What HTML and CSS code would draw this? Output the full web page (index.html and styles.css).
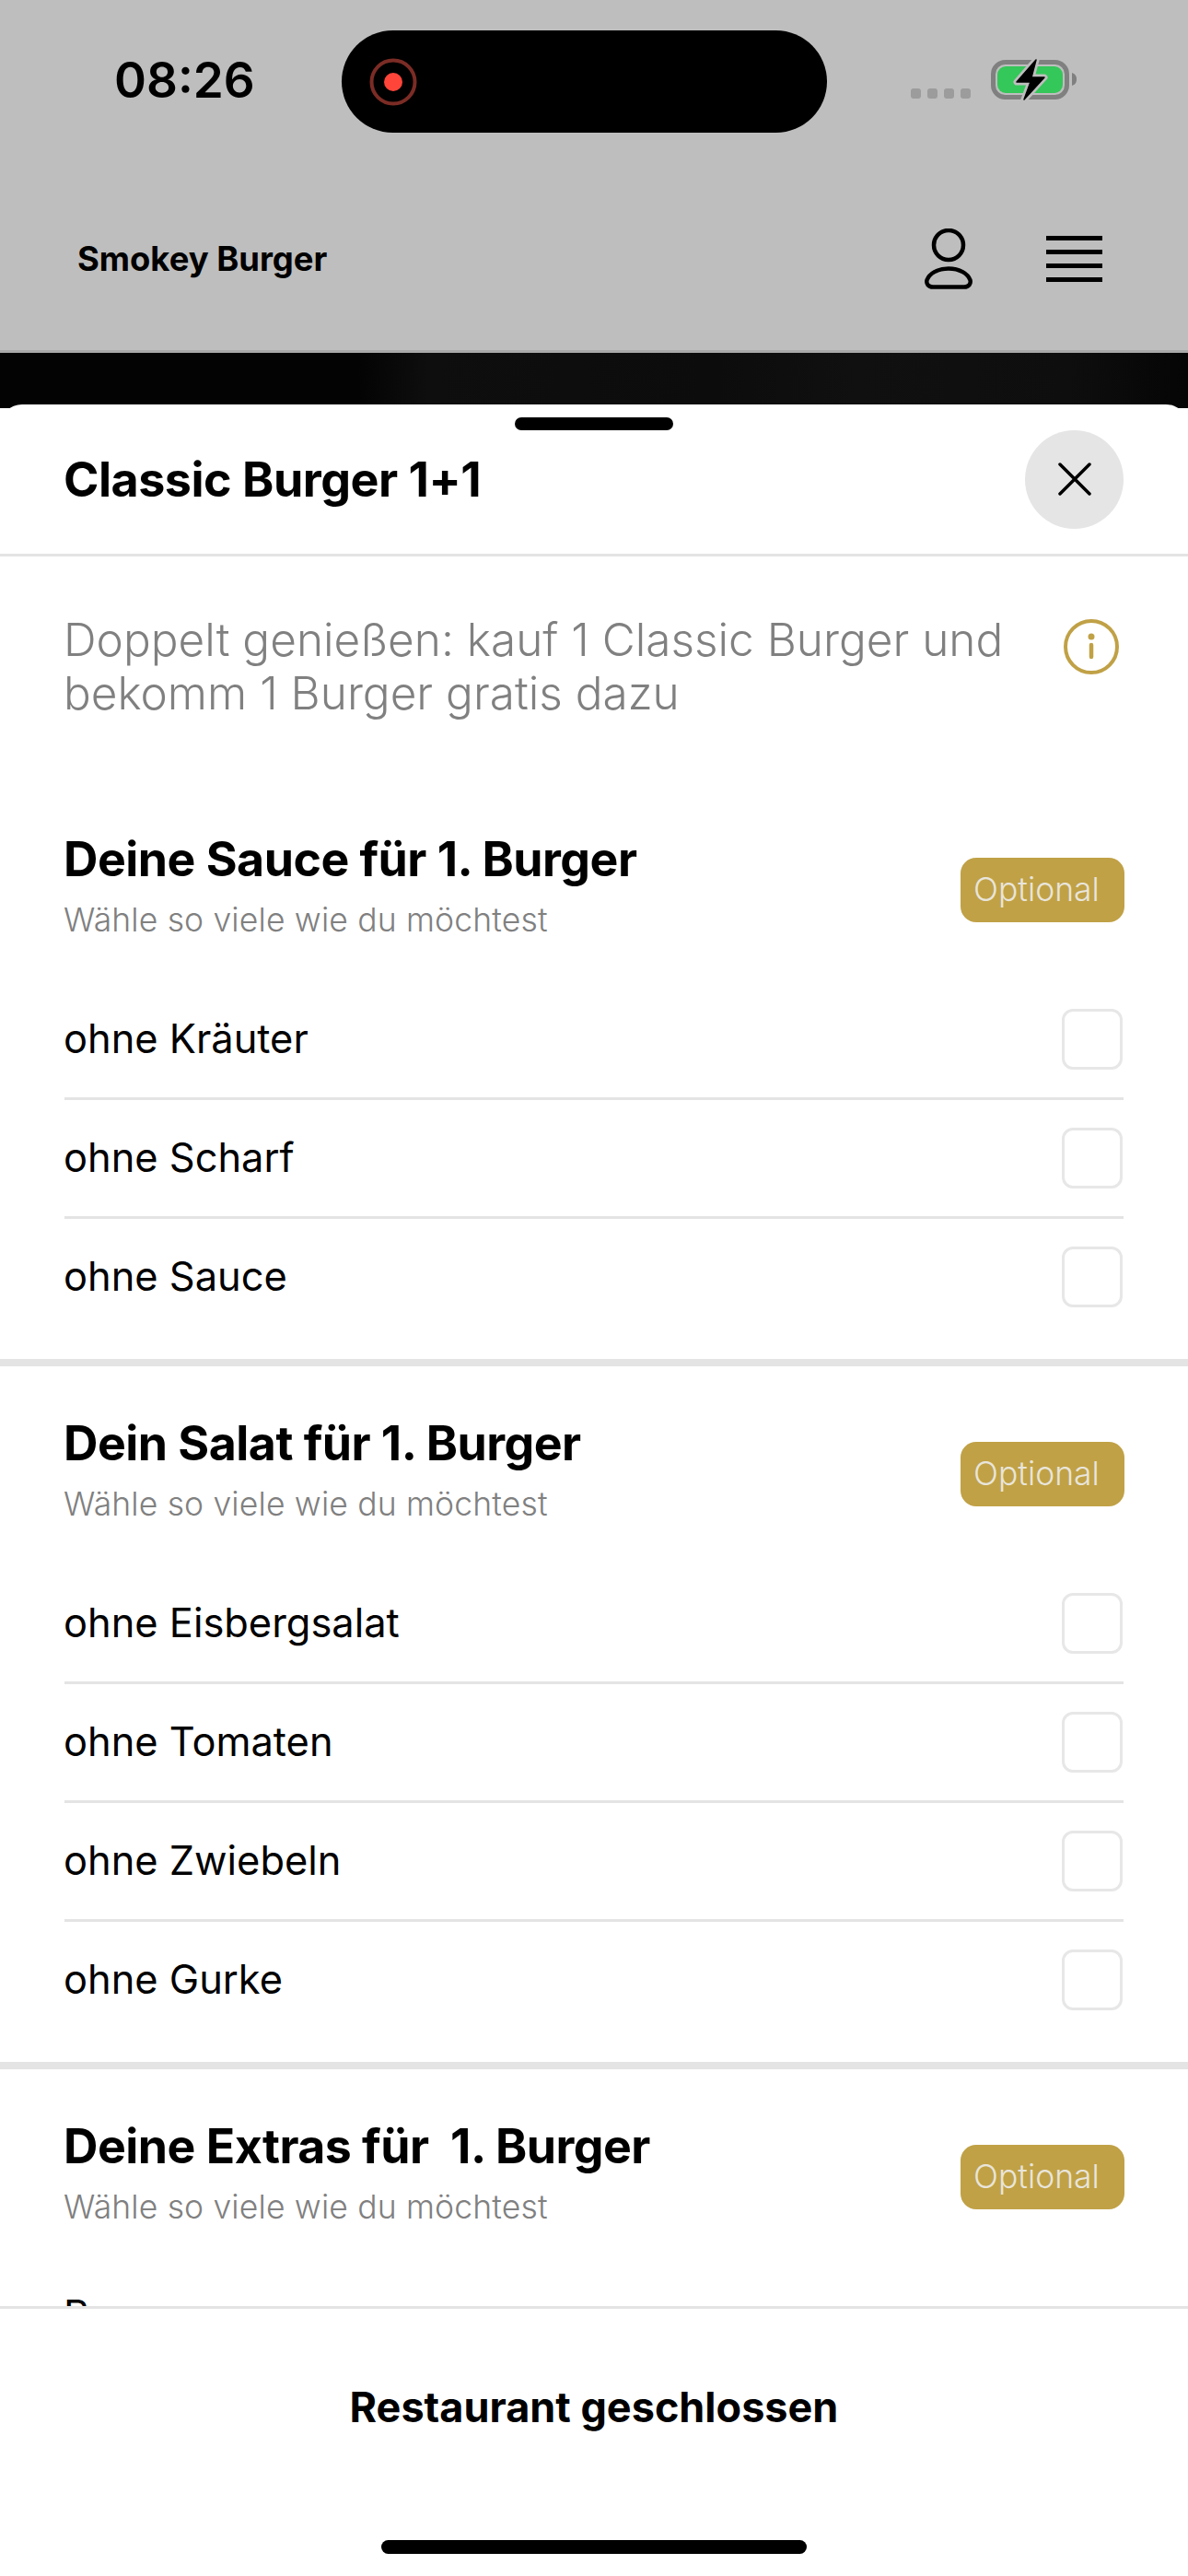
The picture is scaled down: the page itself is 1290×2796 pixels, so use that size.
FILE: index.html
```html
<!DOCTYPE html>
<html lang="en">
<head>
    <meta charset="UTF-8">
    <meta name="viewport" content="width=device-width, initial-scale=1.0">
    <title>Classic Burger 1+1 - Smokey Burger</title>
    <link rel="stylesheet" href="styles.css">
</head>
<body>
    <div class="page">
        <header class="top-bar">
            <div class="status-bar">
                <span class="time">08:26</span>
                <div class="island">
                    <svg class="record-icon" viewBox="0 0 52 52" width="52" height="52">
                        <circle cx="26" cy="26" r="23.5" fill="none" stroke="#7b2c25" stroke-width="4"/>
                        <circle cx="26" cy="26" r="10" fill="#ff453a"/>
                    </svg>
                </div>
                <div class="status-right">
                    <div class="signal"><span></span><span></span><span></span><span></span></div>
                    <svg class="battery" viewBox="0 0 96 46" width="96" height="46">
                        <rect x="2.5" y="4.500" width="80" height="38" rx="13" fill="none" stroke="#808080" stroke-width="5"/>
                        <rect x="7" y="9" width="71" height="29" rx="9" fill="#34c759"/>
                        <path d="M88 16c3 1 5 3 5 7s-2 6-5 7z" fill="#808080"/>
                        <path d="M49 2 28 26h15l-7 19 22-24H44z" fill="none" stroke="#bebebe" stroke-width="7" stroke-linejoin="round"/>
                        <path d="M49 2 28 26h15l-7 19 22-24H44z" fill="#000" stroke="#000" stroke-width="1.500" stroke-linejoin="round"/>
                    </svg>
                </div>
            </div>
            <nav class="nav-bar">
                <span class="brand">Smokey Burger</span>
                <div class="nav-icons">
                    <svg class="user-icon" viewBox="0 0 52 66" width="52" height="66">
                        <circle cx="26" cy="18" r="16" fill="none" stroke="#000" stroke-width="4.500"/>
                        <path d="M9 63.500h34c5 0 7.500-3.500 6.500-7.500C47 49 38 43.500 26 43.500S5 49 2.500 56c-1 4 1.500 7.500 6.500 7.500z" fill="none" stroke="#000" stroke-width="4.500"/>
                    </svg>
                    <div class="menu-icon"><span></span><span></span><span></span><span></span></div>
                </div>
            </nav>
        </header>
        <div class="hero-strip"></div>

        <div class="sheet">
            <div class="grabber"></div>
            <div class="sheet-head">
                <h1>Classic Burger 1+1</h1>
                <button class="close-btn">
                    <svg viewBox="0 0 36 36" width="36" height="36">
                        <path d="M2 2l32 32M34 2 2 34" stroke="#000" stroke-width="3.500" stroke-linecap="round"/>
                    </svg>
                </button>
            </div>

            <div class="sheet-body">
                <div class="intro">
                    <p>Doppelt genießen: kauf 1 Classic Burger und bekomm 1 Burger gratis dazu</p>
                    <svg class="info-icon" viewBox="0 0 60 60" width="60" height="60">
                        <circle cx="30" cy="30" r="28" fill="none" stroke="#c0a146" stroke-width="4"/>
                        <circle cx="30" cy="19" r="3.500" fill="#c0a146"/>
                        <path d="M30 28v13" stroke="#c0a146" stroke-width="4.500" stroke-linecap="round"/>
                    </svg>
                </div>

                <section class="group">
                    <div class="group-head">
                        <div>
                            <h2>Deine Sauce für 1. Burger</h2>
                            <p class="hint">Wähle so viele wie du möchtest</p>
                        </div>
                        <span class="badge">Optional</span>
                    </div>
                    <div class="option"><span>ohne Kräuter</span><i class="checkbox"></i></div>
                    <div class="option"><span>ohne Scharf</span><i class="checkbox"></i></div>
                    <div class="option"><span>ohne Sauce</span><i class="checkbox"></i></div>
                </section>

                <section class="group">
                    <div class="group-head">
                        <div>
                            <h2>Dein Salat für 1. Burger</h2>
                            <p class="hint">Wähle so viele wie du möchtest</p>
                        </div>
                        <span class="badge">Optional</span>
                    </div>
                    <div class="option"><span>ohne Eisbergsalat</span><i class="checkbox"></i></div>
                    <div class="option"><span>ohne Tomaten</span><i class="checkbox"></i></div>
                    <div class="option"><span>ohne Zwiebeln</span><i class="checkbox"></i></div>
                    <div class="option"><span>ohne Gurke</span><i class="checkbox"></i></div>
                </section>

                <section class="group">
                    <div class="group-head">
                        <div>
                            <h2>Deine Extras für &nbsp;1. Burger</h2>
                            <p class="hint">Wähle so viele wie du möchtest</p>
                        </div>
                        <span class="badge">Optional</span>
                    </div>
                    <div class="option option-peek"><span>Bacon</span></div>
                </section>
            </div>

            <div class="sheet-foot">
                <strong>Restaurant geschlossen</strong>
                <div class="home-bar"></div>
            </div>
        </div>
    </div>
</body>
</html>
```

FILE: styles.css
```css
* {
    box-sizing: border-box;
}
body {
    margin: 0;
    font-family: Inter, "Noto Sans", sans-serif;
    color: #000;
    background-color: #fff;
}
h1, h2, p {
    margin: 0;
}
.page {
    position: relative;
    height: 2796px;
    overflow: hidden;
}

/* dimmed page behind the sheet */
.top-bar {
    height: 383px;
    background-color: #bebebe;
    border-bottom: 3px solid #a9a9a9;
}
.status-bar {
    display: flex;
    align-items: flex-start;
    height: 144px;
    padding-top: 33px;
    padding-left: 124px;
}
.time {
    width: 247px;
    margin-top: 22px;
    font-size: 53px;
    line-height: 64px;
    font-weight: 600;
}
.island {
    display: flex;
    align-items: center;
    width: 527px;
    height: 111px;
    padding-left: 30px;
    background-color: #000;
    border-radius: 56px;
}
.status-right {
    display: flex;
    align-items: flex-end;
    margin-left: 91px;
    margin-top: 30px;
    gap: 22px;
}
.signal {
    display: flex;
    gap: 7px;
    margin-bottom: 2px;
}
.signal span {
    width: 11px;
    height: 11px;
    background-color: #9c9c9c;
    border-radius: 3px;
}
.nav-bar {
    display: flex;
    justify-content: space-between;
    align-items: center;
    height: 275px;
    margin-top: -1px;
    padding: 0 93px 0 84px;
}
.brand {
    font-size: 36.4px;
    font-weight: 700;
}
.nav-icons {
    display: flex;
    align-items: center;
    gap: 80px;
}
.menu-icon {
    display: flex;
    flex-direction: column;
    gap: 10px;
    width: 61px;
}
.menu-icon span {
    height: 5px;
    background-color: #000;
}
.hero-strip {
    height: 60px;
    background: linear-gradient(90deg, #030303, #030303 30%, #0e0e0e 36%, #0c0c0c 60%, #101010 72%, #0e0e0e 90%, #050505);
}

/* bottom sheet */
.sheet {
    position: absolute;
    top: 439px;
    left: 0;
    right: 0;
    bottom: 0;
    display: flex;
    flex-direction: column;
    background-color: #fff;
    border-radius: 24px 24px 0 0;
}
.grabber {
    position: absolute;
    top: 14px;
    left: 559px;
    width: 172px;
    height: 14px;
    background-color: #000;
    border-radius: 7px;
}
.sheet-head {
    display: flex;
    justify-content: space-between;
    align-items: center;
    height: 165px;
    padding: 0 70px 0 69px;
    border-bottom: 3px solid #e4e4e4;
    flex-shrink: 0;
}
.sheet-head h1 {
    font-size: 52px;
    font-weight: 700;
    letter-spacing: -0.5px;
}
.close-btn {
    display: flex;
    justify-content: center;
    align-items: center;
    width: 107px;
    height: 107px;
    padding: 0;
    background-color: #e5e5e5;
    border: none;
    border-radius: 50%;
}
.sheet-body {
    flex: 1;
    overflow: hidden;
}
.intro {
    display: flex;
    justify-content: space-between;
    height: 245px;
    padding: 61px 75px 0 69px;
}
.intro p {
    width: 1040px;
    font-size: 49.5px;
    line-height: 58px;
    font-weight: 300;
    color: #808080;
}
.info-icon {
    flex-shrink: 0;
    margin-top: 7px;
}
.group {
    border-bottom: 8px solid #e4e4e4;
    padding-bottom: 23px;
}
.group-head {
    display: flex;
    justify-content: space-between;
    align-items: flex-start;
    height: 216px;
    padding: 53px 69px 0;
}
.group-head h2 {
    font-size: 51.8px;
    line-height: 60px;
    font-weight: 700;
    letter-spacing: -0.5px;
}
.hint {
    margin-top: 16px;
    font-size: 35.5px;
    line-height: 42px;
    font-weight: 300;
    letter-spacing: 0.15px;
    color: #808080;
}
.badge {
    width: 178px;
    height: 70px;
    margin-top: 29px;
    padding-left: 14px;
    font-size: 35.5px;
    line-height: 69px;
    font-weight: 300;
    color: #e9e5da;
    background-color: #c0a146;
    border-radius: 17px;
}
.option {
    display: flex;
    justify-content: space-between;
    align-items: center;
    height: 129px;
    margin: 0 70px;
    font-size: 43.4px;
    border-bottom: 3px solid #e4e4e4;
}
.option span {
    margin-left: -1px;
    margin-bottom: 3px;
}
.option:last-child {
    border-bottom-color: transparent;
}
.option-peek {
    padding-bottom: 24px;
}
.checkbox {
    width: 66px;
    height: 66px;
    margin-right: 1px;
    border: 3px solid #e7e7e7;
    border-radius: 12px;
}
.sheet-foot {
    position: relative;
    height: 293px;
    padding-top: 79px;
    text-align: center;
    background-color: #fff;
    border-top: 3px solid #e4e4e4;
    flex-shrink: 0;
}
.sheet-foot strong {
    font-size: 45px;
    line-height: 56px;
    font-weight: 700;
}
.home-bar {
    position: absolute;
    left: 414px;
    bottom: 24px;
    width: 462px;
    height: 15px;
    background-color: #000;
    border-radius: 8px;
}
```
